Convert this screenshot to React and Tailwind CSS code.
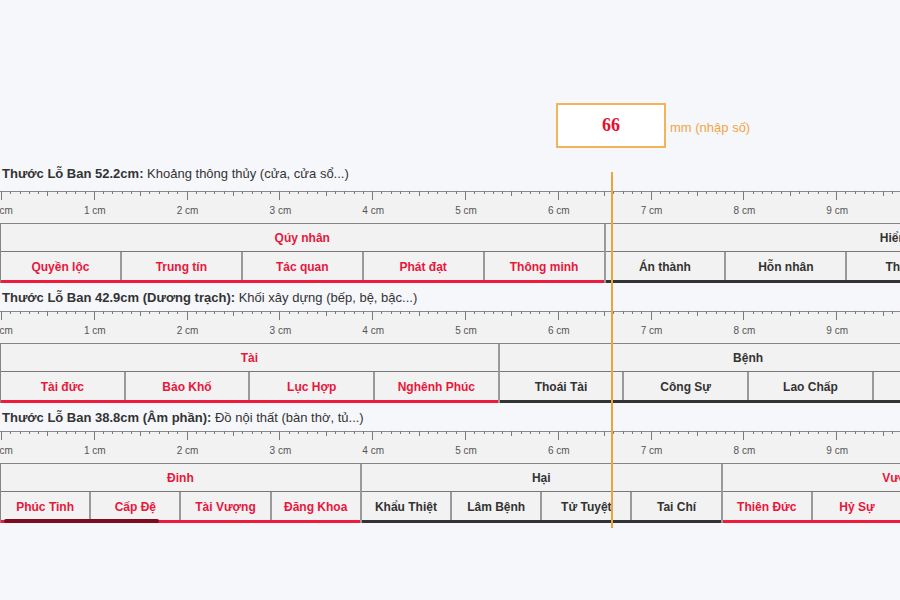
import React from "react";

const TICK = 92.8; // px per cm on the scale
const CELL = 93; // px per cm for the cung table

const rulers = [
  {
    title: "Thước Lỗ Ban 52.2cm:",
    note: "Khoảng thông thủy (cửa, cửa sổ...)",
    len: 6.5,
    gap: "mt-[18px] mb-[9px]",
    groups: [
      { name: "Qúy nhân", good: true, items: ["Quyền lộc", "Trung tín", "Tác quan", "Phát đạt", "Thông minh"] },
      { name: "Hiểm họa", good: false, items: ["Án thành", "Hỗn nhân", "Thất tài", "Chiêu họa", "Tử tuyệt"] },
    ],
  },
  {
    title: "Thước Lỗ Ban 42.9cm (Dương trạch):",
    note: "Khối xây dựng (bếp, bệ, bậc...)",
    len: 5.3625,
    gap: "mt-[7px] mb-[5px]",
    groups: [
      { name: "Tài", good: true, items: ["Tài đức", "Bảo Khố", "Lục Hợp", "Nghênh Phúc"] },
      { name: "Bệnh", good: false, items: ["Thoái Tài", "Công Sự", "Lao Chấp", "Cô Quả"] },
    ],
  },
  {
    title: "Thước Lỗ Ban 38.8cm (Âm phần):",
    note: "Đồ nội thất (bàn thờ, tủ...)",
    len: 3.88,
    gap: "mt-[7px] mb-[5px]",
    mark: true,
    groups: [
      { name: "Đinh", good: true, items: ["Phúc Tinh", "Cấp Đệ", "Tài Vượng", "Đăng Khoa"] },
      { name: "Hại", good: false, items: ["Khẩu Thiệt", "Lâm Bệnh", "Tử Tuyệt", "Tai Chí"] },
      { name: "Vượng", good: true, items: ["Thiên Đức", "Hỷ Sự", "Tiến Bảo", "Nạp Phúc"] },
    ],
  },
];

function Scale() {
  const ticks = [];
  for (let i = 0; i <= 110; i++) {
    const x = Math.round(1 + i * (TICK / 10)) + 0.5;
    const h = i % 10 === 0 ? 9 : i % 5 === 0 ? 5 : 3;
    ticks.push(<line key={i} x1={x} x2={x} y1={0} y2={h} stroke="#7a7a7a" strokeWidth="1" />);
  }
  const labels = [];
  for (let c = 0; c <= 10; c++) {
    labels.push(
      <text key={c} x={2 + c * TICK} y={23} textAnchor="middle" fontSize="10" fill="#555" fontFamily="Liberation Sans, Arial, sans-serif">
        {c} cm
      </text>
    );
  }
  return (
    <svg width="1000" height="32" className="block bg-[#f2f2f2]">
      <line x1="0" x2="1000" y1="0.5" y2="0.5" stroke="#8a8a8a" />
      {ticks}
      {labels}
    </svg>
  );
}

function Ruler({ r }) {
  return (
    <div>
      <div className={`${r.gap} pl-[2px] text-[13px] leading-4 text-[#333]`}>
        <b>{r.title}</b> {r.note}
      </div>
      <Scale />
      <div className="relative flex w-[1100px] border-t border-l border-[#858585] bg-[#f2f2f2]">
        {r.groups.map((g) => (
          <div key={g.name} className="flex shrink-0 flex-col border-r-2 border-[#9a9a9a]" style={{ width: r.len * CELL }}>
            <div className={`flex h-[28px] items-center justify-center border-b border-[#777] text-[12px] font-bold ${g.good ? "text-[#e8173c]" : "text-[#333]"}`}>
              {g.name}
            </div>
            <div className="flex h-[28px]">
              {g.items.map((it, i) => (
                <div
                  key={it}
                  className={`flex flex-1 items-center justify-center pt-[1px] text-[12px] font-bold ${i < g.items.length - 1 ? "border-r-2 border-[#9a9a9a]" : ""} ${g.good ? "text-[#e8173c]" : "text-[#333]"}`}
                >
                  {it}
                </div>
              ))}
            </div>
            <div className={`h-[3px] ${g.good ? "bg-[#ee1b3d]" : "bg-[#333]"}`} />
          </div>
        ))}
        {r.mark && <div className="absolute bottom-0 left-[3px] h-[4px] w-[155px] rounded-full bg-[#7d0b22]" />}
      </div>
    </div>
  );
}

export default function App() {
  return (
    <div className="relative h-[600px] w-[900px] overflow-hidden bg-[#f6f7fb] font-['Liberation_Sans',Arial,sans-serif]">
      <div className="flex items-center pl-[556px] pt-[103px]">
        <div className="flex h-[45px] w-[110px] items-center justify-center border-2 border-[#f5b25a] bg-white font-['Liberation_Serif',serif] text-[18px] font-bold text-[#e3102f]">
          66
        </div>
        <span className="ml-[4px] mt-[5px] text-[13px] text-[#f2a545]">mm (nhập số)</span>
      </div>
      {rulers.map((r) => (
        <Ruler key={r.title} r={r} />
      ))}
      <div className="absolute left-[611px] top-[172px] h-[356px] w-[2px] bg-[#eea33c]" />
    </div>
  );
}
